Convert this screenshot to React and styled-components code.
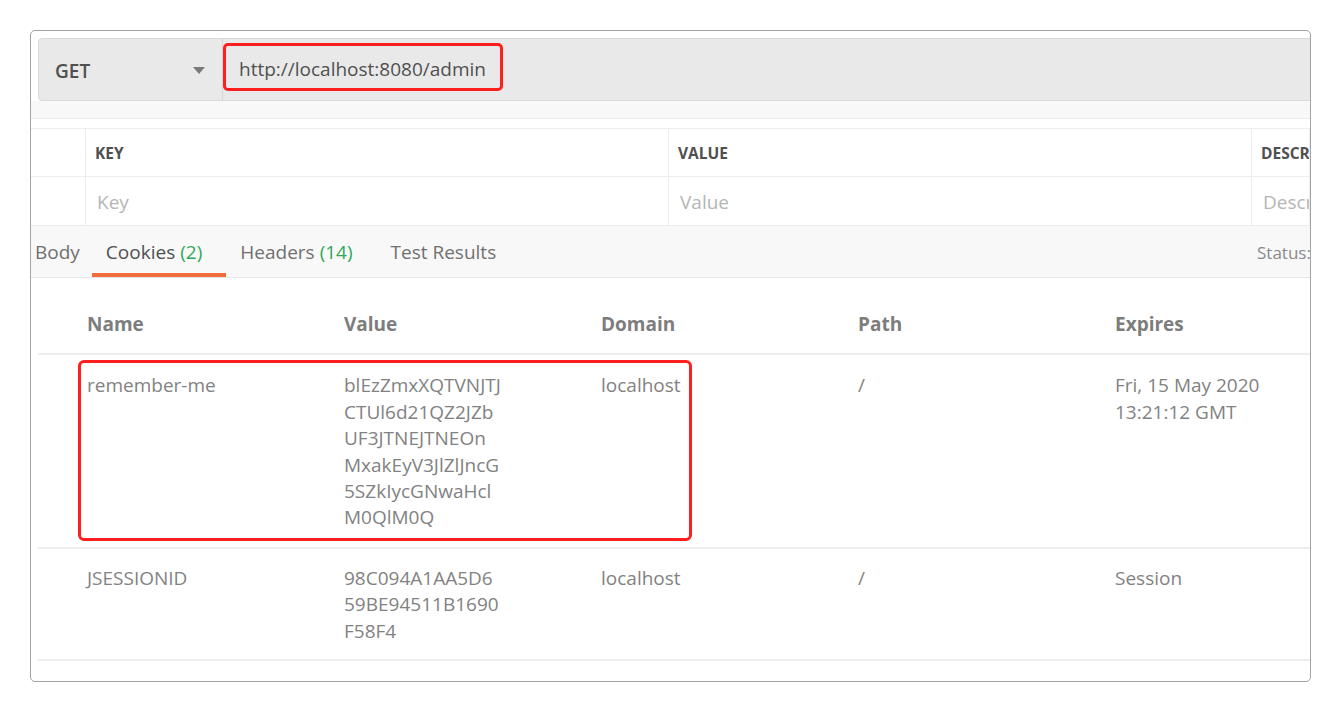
import React from 'react'
import styled, { createGlobalStyle } from 'styled-components'

const Global = createGlobalStyle`
  html, body { margin: 0; padding: 0; background: #fff; }
  body { font-family: "Open Sans", "Liberation Sans", sans-serif; }
  * { box-sizing: border-box; }
`

const Page = styled.div`
  padding: 30px 0 0 30px;
  width: 1341px;
  height: 712px;
`

const Frame = styled.div`
  width: 1281px;
  height: 652px;
  border: 1px solid #a3a3a3;
  border-radius: 5px;
  overflow: hidden;
  background: #fff;
`

const RequestBar = styled.div`
  display: flex;
  margin: 7px 0 0 7px;
  width: calc(100% + 10px);
  height: 63px;
  background: #e9e9e9;
  border: 1px solid #d9d9d9;
  border-radius: 4px;
`

const Method = styled.div`
  width: 184px;
  flex: none;
  display: flex;
  align-items: center;
  justify-content: space-between;
  padding: 2px 17px 0 16px;
  border-right: 1px solid #d6d6d6;
  font-size: 19px;
  font-weight: 600;
  color: #505050;
`

const Caret = styled.span`
  width: 0;
  height: 0;
  border-left: 6px solid transparent;
  border-right: 6px solid transparent;
  border-top: 7px solid #7a7a7a;
`

const UrlBox = styled.div`
  margin-top: 4px;
  height: 48px;
  display: flex;
  align-items: center;
  padding: 4px 14px 0 13px;
  border: 3px solid #ff1f1f;
  border-radius: 5px;
  font-size: 19px;
  color: #505050;
`

const Strip = styled.div`
  height: 18px;
  background: #f8f8f8;
  border-bottom: 1px solid #ebebeb;
  margin-bottom: 9px;
`

const ParamRow = styled.div`
  display: grid;
  grid-template-columns: 55px 583px 583px 1fr;
  height: 49px;
  border-top: ${p => (p.$first ? '1px solid #ececec' : 'none')};
  border-bottom: 1px solid #ececec;
`

const ParamCell = styled.div`
  display: flex;
  align-items: center;
  white-space: nowrap;
  overflow: hidden;
  border-right: 1px solid #ececec;
  padding-left: ${p => (p.$head ? '9px' : '11px')};
  padding-top: 1px;
  font-size: ${p => (p.$head ? '15.5px' : '19px')};
  font-weight: ${p => (p.$head ? 700 : 400)};
  color: ${p => (p.$head ? '#505050' : '#b5b5b5')};
`

const TabBar = styled.div`
  display: flex;
  align-items: stretch;
  width: calc(100% + 57px);
  height: 52px;
  background: #f8f8f8;
  border-bottom: 1px solid #e6e6e6;
  margin-left: -10px;
`

const Tab = styled.div`
  position: relative;
  display: flex;
  align-items: center;
  padding: 1px 24px 0 14px;
  font-size: 19px;
  color: ${p => (p.$active ? '#505050' : '#707070')};
  &:first-child { padding-right: 12px; }
  &::after {
    content: '';
    position: absolute;
    left: 0;
    right: 0;
    bottom: 0;
    height: 4px;
    background: ${p => (p.$active ? '#f26b3a' : 'transparent')};
  }
`

const Count = styled.span`
  color: #2fa85a;
  margin-left: 5px;
`

const Status = styled.div`
  margin-left: auto;
  width: 100px;
  display: flex;
  align-items: center;
  padding-top: 1px;
  font-size: 17px;
  color: #8a8a8a;
`

const CookieTable = styled.div`
  margin: 0 0 0 7px;
`

const CookieRow = styled.div`
  position: relative;
  display: grid;
  grid-template-columns: 257px 257px 257px 257px 1fr;
  padding: ${p => (p.$head ? '33px 0 16px 49px' : p.$pad)};
  border-bottom: 2px solid #eeeeee;
  font-size: 19px;
  line-height: 26.4px;
  font-weight: ${p => (p.$head ? 700 : 400)};
  color: ${p => (p.$head ? '#7d7d7d' : '#828282')};
`

const Cell = styled.div`
  white-space: nowrap;
`

const Highlight = styled.div`
  position: absolute;
  left: 40px;
  top: 5px;
  width: 614px;
  height: 181px;
  border: 3px solid #ff1f1f;
  border-radius: 6px;
  pointer-events: none;
`

const cookies = [
  {
    name: 'remember-me',
    value: ['blEzZmxXQTVNJTJ', 'CTUl6d21QZ2JZb', 'UF3JTNEJTNEOn', 'MxakEyV3JlZlJncG', '5SZkIycGNwaHcl', 'M0QlM0Q'],
    domain: 'localhost',
    path: '/',
    expires: ['Fri, 15 May 2020', '13:21:12 GMT'],
    pad: '17px 0 16px 49px',
    marked: true,
  },
  {
    name: 'JSESSIONID',
    value: ['98C094A1AA5D6', '59BE94511B1690', 'F58F4'],
    domain: 'localhost',
    path: '/',
    expires: ['Session'],
    pad: '16px 0 15px 49px',
  },
]

const Lines = ({ items }) => (
  <Cell>
    {items.map((t, i) => (
      <div key={i}>{t}</div>
    ))}
  </Cell>
)

export default function App() {
  return (
    <Page>
      <Global />
      <Frame>
        <RequestBar>
          <Method>
            GET
            <Caret />
          </Method>
          <UrlBox>http://localhost:8080/admin</UrlBox>
        </RequestBar>
        <Strip />
        <ParamRow $first>
          <ParamCell $head />
          <ParamCell $head>KEY</ParamCell>
          <ParamCell $head>VALUE</ParamCell>
          <ParamCell $head>DESCRIPTION</ParamCell>
        </ParamRow>
        <ParamRow>
          <ParamCell />
          <ParamCell>Key</ParamCell>
          <ParamCell>Value</ParamCell>
          <ParamCell>Description</ParamCell>
        </ParamRow>
        <TabBar>
          <Tab>Body</Tab>
          <Tab $active>
            Cookies<Count>(2)</Count>
          </Tab>
          <Tab>
            Headers<Count>(14)</Count>
          </Tab>
          <Tab>Test Results</Tab>
          <Status>Status:</Status>
        </TabBar>
        <CookieTable>
          <CookieRow $head>
            <Cell>Name</Cell>
            <Cell>Value</Cell>
            <Cell>Domain</Cell>
            <Cell>Path</Cell>
            <Cell>Expires</Cell>
          </CookieRow>
          {cookies.map(c => (
            <CookieRow key={c.name} $pad={c.pad}>
              <Cell>{c.name}</Cell>
              <Lines items={c.value} />
              <Cell>{c.domain}</Cell>
              <Cell>{c.path}</Cell>
              <Lines items={c.expires} />
              {c.marked && <Highlight />}
            </CookieRow>
          ))}
        </CookieTable>
      </Frame>
    </Page>
  )
}
